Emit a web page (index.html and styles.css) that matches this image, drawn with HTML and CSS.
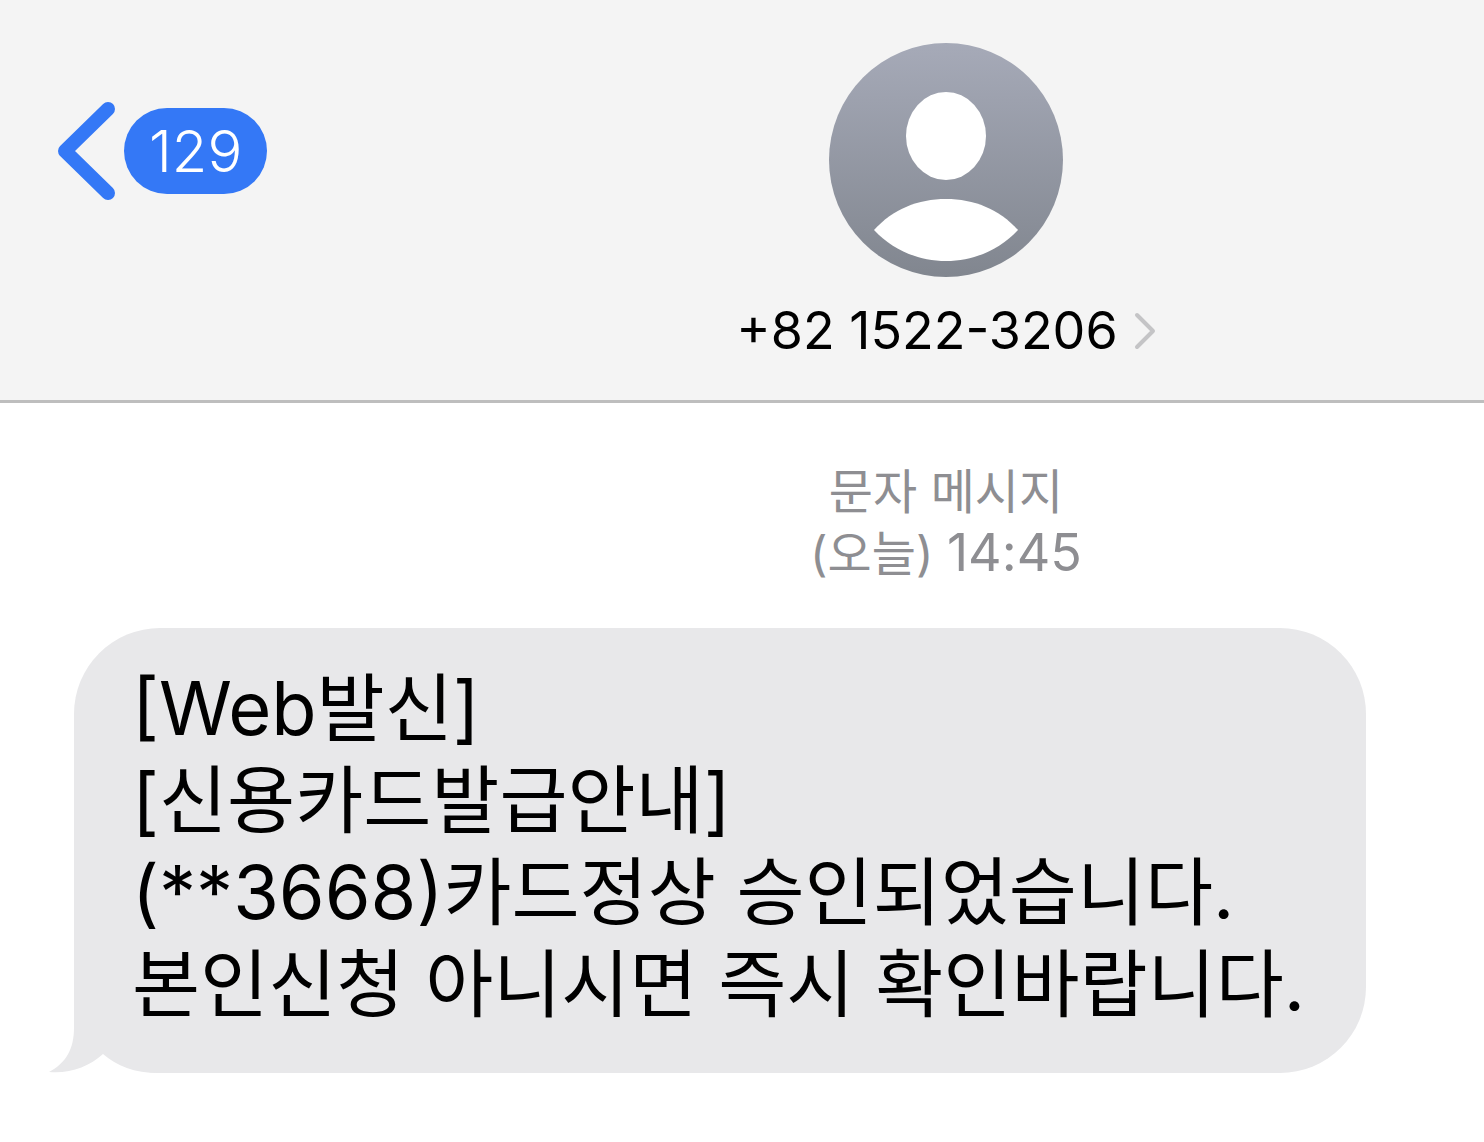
FILE: index.html
```
<!DOCTYPE html>
<html lang="ko">

<head>
    <meta charset="UTF-8">
    <meta name="viewport" content="width=device-width, initial-scale=1.0">
    <title>+82 1522-3206</title>
    <link rel="stylesheet" href="styles.css">
</head>

<body>
    <!-- Header -->
    <header class="navbar">
        <a class="back" href="#" aria-label="뒤로, 129">
            <svg class="back-arrow" viewBox="0 0 58 98" aria-hidden="true">
                <path d="M50 7 L7 49 L50 91" />
            </svg>
            <span class="badge">129</span>
        </a>
        <div class="contact">
            <svg class="avatar" viewBox="0 0 234 234" aria-hidden="true">
                <defs>
                    <linearGradient id="avatar-bg" x1="0" y1="0" x2="0" y2="1">
                        <stop offset="0" stop-color="#a6aab8" />
                        <stop offset="1" stop-color="#81868f" />
                    </linearGradient>
                </defs>
                <circle cx="117" cy="117" r="117" fill="url(#avatar-bg)" />
                <ellipse cx="117" cy="93" rx="40" ry="44" fill="#fff" />
                <path d="M45 187 C64 166 89 156 117 156 C145 156 170 166 189 187 C170 207 145 218 117 218 C89 218 64 207 45 187 Z" fill="#fff" />
            </svg>
            <a class="contact-name" href="#">
                <span>+82 1522-3206</span>
                <svg class="chevron" viewBox="0 0 22 38" aria-hidden="true">
                    <path d="M3 3 L19 19 L3 35" />
                </svg>
            </a>
        </div>
    </header>

    <!-- Messages -->
    <main class="messages">
        <p class="timestamp">문자 메시지<br>(오늘) <span class="time">14:45</span></p>
        <div class="bubble">
            <p>[Web발신]<br>[신용카드발급안내]<br>(**3668)카드정상 승인되었습니다.<br>본인신청 아니시면 즉시 확인바랍니다.</p>
            <svg class="tail" viewBox="0 0 110 100" aria-hidden="true">
                <path d="M25 0 V55 C25 76 17 90 0 99 C20 101 40 94 54 81 C68 93 85 100 110 100 V0 Z" />
            </svg>
        </div>
    </main>
</body>

</html>
```

FILE: styles.css
```
/* General Styles */
:root {
    --side: 408px; /* left column that holds the back button */
}

* {
    box-sizing: border-box;
}

body {
    font-family: "Inter", "Noto Sans CJK KR", sans-serif;
    margin: 0;
    background-color: #fff;
    color: #000;
}

p {
    margin: 0;
}

a {
    color: inherit;
    text-decoration: none;
}

svg {
    display: block;
    flex: none;
}

/* Header Styles */
.navbar {
    display: grid;
    grid-template-columns: var(--side) 1fr;
    align-items: start;
    padding: 43px 0 39px;
    background-color: #f4f4f4;
    border-bottom: 3px solid #bebebe;
}

.back {
    display: flex;
    align-items: center;
    gap: 8px;
    padding: 59px 0 0 58px;
}

.back-arrow {
    width: 58px;
    height: 98px;
    fill: none;
    stroke: #3478f6;
    stroke-width: 14;
    stroke-linecap: round;
    stroke-linejoin: round;
}

.badge {
    padding: 0 25px;
    border-radius: 43px;
    background-color: #3478f6;
    color: #fff;
    font-size: 58px;
    font-weight: 300;
    line-height: 86px;
}

.contact {
    display: flex;
    flex-direction: column;
    align-items: center;
    gap: 24px;
}

.avatar {
    width: 234px;
    height: 234px;
}

.contact-name {
    display: flex;
    align-items: center;
    gap: 16px;
    font-size: 52px;
    line-height: 60px;
}

.chevron {
    width: 22px;
    height: 38px;
    fill: none;
    stroke: #c4c4c6;
    stroke-width: 4;
    stroke-linecap: round;
    stroke-linejoin: round;
}

/* Message Styles */
.messages {
    padding: 58px 118px 70px 74px;
}

.timestamp {
    margin: 0 -118px 44px 334px;
    color: #8e8e92;
    font-size: 48px;
    line-height: 61px;
    text-align: center;
}

.time {
    font-size: 52px;
}

.bubble {
    position: relative;
    isolation: isolate;
    padding: 34px 48px 43px 58px;
    border-radius: 86px;
    background-color: #e8e8ea;
    font-size: 74px;
    line-height: 92px;
}

.tail {
    position: absolute;
    z-index: -1; /* keep it under the text */
    left: -25px;
    bottom: 0;
    width: 110px;
    height: 100px;
    fill: #e8e8ea;
}
```
